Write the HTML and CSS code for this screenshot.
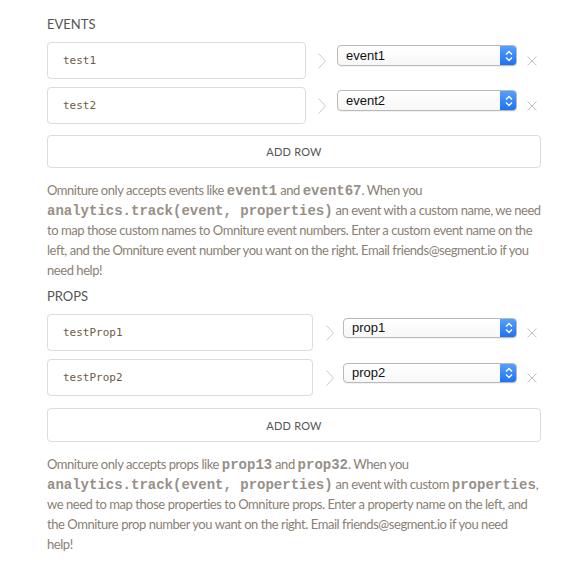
FILE: index.html
```html
<!DOCTYPE html>
<html>
<head>
<meta charset="utf-8">
<link rel="stylesheet" href="styles.css">
</head>
<body>
<div class="page">
  <section class="section events">
    <h3 class="label">Events</h3>
    <div class="rows">
      <div class="row">
        <div class="input">test1</div>
        <svg class="arrow" width="8" height="16" viewBox="0 0 8 16"><polyline points="0.5,0.5 7.5,8 0.5,15.5" fill="none" stroke="#c9c9c9" stroke-width="1"/></svg>
        <div class="select"><span class="select-text">event1</span><span class="select-btn"><svg width="8" height="12" viewBox="0 0 8 12"><polyline points="1,4.5 4,1.5 7,4.5" fill="none" stroke="#fff" stroke-width="1.4"/><polyline points="1,7.5 4,10.5 7,7.5" fill="none" stroke="#fff" stroke-width="1.4"/></svg></span></div>
        <svg class="remove" width="10" height="10" viewBox="0 0 10 10"><path d="M0.5 0.5 L9.5 9.5 M9.5 0.5 L0.5 9.5" stroke="#c4c4c4" stroke-width="1"/></svg>
      </div>
      <div class="row">
        <div class="input">test2</div>
        <svg class="arrow" width="8" height="16" viewBox="0 0 8 16"><polyline points="0.5,0.5 7.5,8 0.5,15.5" fill="none" stroke="#c9c9c9" stroke-width="1"/></svg>
        <div class="select"><span class="select-text">event2</span><span class="select-btn"><svg width="8" height="12" viewBox="0 0 8 12"><polyline points="1,4.5 4,1.5 7,4.5" fill="none" stroke="#fff" stroke-width="1.4"/><polyline points="1,7.5 4,10.5 7,7.5" fill="none" stroke="#fff" stroke-width="1.4"/></svg></span></div>
        <svg class="remove" width="10" height="10" viewBox="0 0 10 10"><path d="M0.5 0.5 L9.5 9.5 M9.5 0.5 L0.5 9.5" stroke="#c4c4c4" stroke-width="1"/></svg>
      </div>
    </div>
    <button class="add-row">ADD ROW</button>
    <p class="help">Omniture only accepts events like <code>event1</code> and <code>event67</code>. When you<br><code>analytics.track(event, properties)</code> an event with a custom name, we need<br>to map those custom names to Omniture event numbers. Enter a custom event name on the<br>left, and the Omniture event number you want on the right. Email friends@segment.io if you<br>need help!</p>
  </section>

  <section class="section props">
    <h3 class="label">Props</h3>
    <div class="rows">
      <div class="row">
        <div class="input">testProp1</div>
        <svg class="arrow" width="8" height="16" viewBox="0 0 8 16"><polyline points="0.5,0.5 7.5,8 0.5,15.5" fill="none" stroke="#c9c9c9" stroke-width="1"/></svg>
        <div class="select"><span class="select-text">prop1</span><span class="select-btn"><svg width="8" height="12" viewBox="0 0 8 12"><polyline points="1,4.5 4,1.5 7,4.5" fill="none" stroke="#fff" stroke-width="1.4"/><polyline points="1,7.5 4,10.5 7,7.5" fill="none" stroke="#fff" stroke-width="1.4"/></svg></span></div>
        <svg class="remove" width="10" height="10" viewBox="0 0 10 10"><path d="M0.5 0.5 L9.5 9.5 M9.5 0.5 L0.5 9.5" stroke="#c4c4c4" stroke-width="1"/></svg>
      </div>
      <div class="row">
        <div class="input">testProp2</div>
        <svg class="arrow" width="8" height="16" viewBox="0 0 8 16"><polyline points="0.5,0.5 7.5,8 0.5,15.5" fill="none" stroke="#c9c9c9" stroke-width="1"/></svg>
        <div class="select"><span class="select-text">prop2</span><span class="select-btn"><svg width="8" height="12" viewBox="0 0 8 12"><polyline points="1,4.5 4,1.5 7,4.5" fill="none" stroke="#fff" stroke-width="1.4"/><polyline points="1,7.5 4,10.5 7,7.5" fill="none" stroke="#fff" stroke-width="1.4"/></svg></span></div>
        <svg class="remove" width="10" height="10" viewBox="0 0 10 10"><path d="M0.5 0.5 L9.5 9.5 M9.5 0.5 L0.5 9.5" stroke="#c4c4c4" stroke-width="1"/></svg>
      </div>
    </div>
    <button class="add-row">ADD ROW</button>
    <p class="help">Omniture only accepts props like <code>prop13</code> and <code>prop32</code>. When you<br><code>analytics.track(event, properties)</code> an event with custom <code>properties</code>,<br>we need to map those properties to Omniture props. Enter a property name on the left, and<br>the Omniture prop number you want on the right. Email friends@segment.io if you need<br>help!</p>
  </section>
</div>
</body>
</html>
```

FILE: styles.css
```css
html, body {
  margin: 0;
  padding: 0;
  background: #ffffff;
}

.page {
  width: 494px;
  padding: 16px 0 0 47px;
  font-family: Lato, "Open Sans", sans-serif;
}

.section {
  display: flex;
  flex-direction: column;
}

.props {
  margin-top: 8px;
}

.label {
  margin: 0 0 10px 0;
  font-size: 13px;
  line-height: 16px;
  font-weight: 400;
  color: #555555;
  text-transform: uppercase;
}

.rows {
  display: flex;
  flex-direction: column;
  gap: 8px;
}

.row {
  display: flex;
  align-items: center;
  height: 37px;
}

.input {
  flex: 1;
  height: 37px;
  box-sizing: border-box;
  border: 1px solid #dcdcdc;
  border-radius: 4px;
  padding-left: 15px;
  display: flex;
  align-items: center;
  font-family: "DejaVu Sans Mono", monospace;
  font-size: 11px;
  color: #6e5c3e;
}

.arrow {
  flex: none;
  margin-left: 12px;
  margin-right: 11px;
}

.props .arrow {
  margin-left: 13px;
  margin-right: 9px;
}

.select {
  flex: none;
  width: 180px;
  height: 21px;
  box-sizing: border-box;
  align-self: flex-start;
  margin-top: 3px;
  border: 1px solid #b9b9b9;
  border-radius: 4px;
  background: linear-gradient(#ffffff, #f7f7f7);
  display: flex;
  align-items: stretch;
  overflow: hidden;
  box-shadow: 0 1px 0 rgba(0,0,0,0.05);
}

.props .select {
  width: 174px;
  margin-top: 4px;
  height: 20px;
}

.select-text {
  flex: 1;
  padding-left: 8px;
  font-family: "Liberation Sans", Arial, sans-serif;
  font-size: 13px;
  line-height: 19px;
  color: #111111;
}

.props .select-text {
  line-height: 18px;
}

.select-btn {
  width: 17px;
  background: linear-gradient(#5aa2fb, #1b6ff5);
  display: flex;
  align-items: center;
  justify-content: center;
  margin: -1px -1px -1px 0;
  border-radius: 0 4px 4px 0;
}

.remove {
  flex: none;
  margin-left: 10px;
  margin-right: 4px;
}

.add-row {
  margin-top: 11px;
  height: 33px;
  width: 100%;
  background: #ffffff;
  border: 1px solid #dcdcdc;
  border-radius: 4px;
  font-family: Lato, "Open Sans", sans-serif;
  font-size: 11px;
  letter-spacing: 0.2px;
  color: #555555;
  padding: 0;
}

.props .add-row {
  margin-top: 12px;
  height: 34px;
}

.help {
  margin: 12px 0 0 0;
  font-size: 13px;
  line-height: 20px;
  letter-spacing: -0.45px;
  white-space: nowrap;
  color: #8a7f74;
}

.help code {
  font-family: "Liberation Mono", "Courier New", monospace;
  font-weight: 700;
  font-size: 14px;
  line-height: 14px;
  letter-spacing: 0;
  color: #979089;
}
```
